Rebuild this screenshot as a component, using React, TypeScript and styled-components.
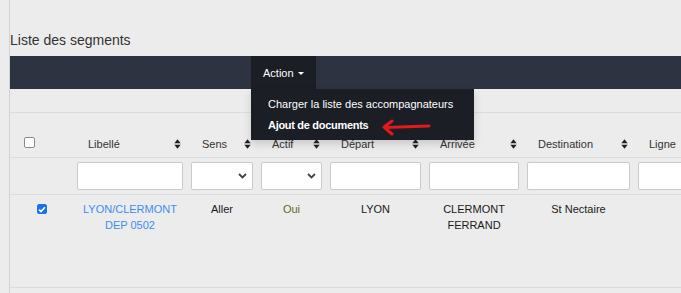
import React from "react";
import styled, { createGlobalStyle } from "styled-components";

const Global = createGlobalStyle`
  html, body { margin: 0; padding: 0; background: #ececec; overflow: hidden; }
  body { font-family: "Liberation Sans", Arial, sans-serif; font-size: 11px; color: #222; }
  * { box-sizing: border-box; }
`;

const Page = styled.div`
  margin-left: 9px;
  border-left: 1px solid #d2d2d2;
  padding-top: 32px;
  min-height: 293px;
`;

const Title = styled.h1`
  margin: 0 0 8px 0;
  font-size: 14px;
  line-height: 16px;
  font-weight: normal;
  color: #333;
`;

const Bar = styled.div`
  position: relative;
  z-index: 5;
  display: flex;
  height: 33px;
  padding-left: 241px;
  background: #2d3340;
  margin-bottom: 23px;
`;

const ActionWrap = styled.div`
  position: relative;
  width: 65px;
  background: #1b1e25;
`;

const ActionButton = styled.div`
  display: flex;
  align-items: center;
  gap: 4px;
  height: 33px;
  padding-left: 12px;
  color: #fff;
  font-size: 11px;
`;

const Caret = styled.span`
  width: 0;
  height: 0;
  border-left: 3px solid transparent;
  border-right: 3px solid transparent;
  border-top: 3px solid #fff;
  margin-top: 1px;
`;

const Menu = styled.div`
  position: absolute;
  top: 100%;
  left: 0;
  width: 223px;
  padding: 5px 0 5px;
  background: #1b1e25;
  box-shadow: 0 4px 8px rgba(0, 0, 0, 0.15);
`;

const MenuItem = styled.div<{ $bold?: boolean }>`
  padding-left: 17px;
  height: 20.5px;
  line-height: 20.5px;
  color: #fff;
  font-weight: ${(p) => (p.$bold ? "bold" : "normal")};
  letter-spacing: ${(p) => (p.$bold ? "-0.3px" : "0")};
  white-space: nowrap;
`;

const Arrow = styled.svg`
  position: absolute;
  left: 130px;
  top: 30px;
`;

const TableWrap = styled.div`
  overflow: hidden;
  border-top: 1px solid #dcdcdc;
`;

const Row = styled.div<{ $height: number }>`
  display: grid;
  grid-template-columns: 63px 114px 70px 69px 99px 98px 111px 100px;
  width: 734px;
  height: ${(p) => p.$height}px;
  border-bottom: 1px solid #dcdcdc;
`;

const HeadCell = styled.div`
  display: flex;
  justify-content: space-between;
  align-items: center;
  padding: 23px 6px 5px 15px;
  height: 44px;
  line-height: 16px;
  color: #333;
  white-space: nowrap;
`;

const CheckCell = styled.div<{ $center?: boolean; $top: number }>`
  display: flex;
  justify-content: ${(p) => (p.$center ? "center" : "flex-start")};
  padding-left: ${(p) => (p.$center ? 0 : 14)}px;
  padding-top: ${(p) => p.$top}px;
`;

const FilterCell = styled.div`
  padding: 4px;
`;

const TextInput = styled.div`
  height: 28px;
  background: #fff;
  border: 1px solid #cacaca;
  border-radius: 2px;
`;

const SelectBox = styled(TextInput)`
  display: flex;
  align-items: center;
  justify-content: flex-end;
  padding-right: 5px;
`;

const DataCell = styled.div<{ $color?: string }>`
  padding: 6px 8px 0;
  text-align: center;
  line-height: 16px;
  color: ${(p) => p.$color || "#1a1a1a"};
`;

const Box = styled.span<{ $checked?: boolean; $size: number }>`
  display: inline-flex;
  align-items: center;
  justify-content: center;
  width: ${(p) => p.$size}px;
  height: ${(p) => p.$size}px;
  border-radius: 2px;
  border: 1px solid ${(p) => (p.$checked ? "#1a73e8" : "#8a8a8a")};
  background: ${(p) => (p.$checked ? "#1a73e8" : "#fff")};
`;

const SortIcon = () => (
  <svg width="7" height="10" viewBox="0 0 7 10">
    <polygon points="0.3,4.2 3.5,0.3 6.7,4.2" fill="#222" />
    <polygon points="0.3,5.8 3.5,9.7 6.7,5.8" fill="#222" />
  </svg>
);

const Chevron = () => (
  <svg width="9" height="6" viewBox="0 0 9 6">
    <polyline points="1,1 4.5,4.5 8,1" fill="none" stroke="#444" strokeWidth="1.8" />
  </svg>
);

const Checkbox = ({ checked, size }: { checked?: boolean; size: number }) => (
  <Box $checked={checked} $size={size}>
    {checked && (
      <svg width="8" height="7" viewBox="0 0 8 7">
        <polyline points="1,3.6 3,5.6 7,1.2" fill="none" stroke="#fff" strokeWidth="1.7" />
      </svg>
    )}
  </Box>
);

const headers = ["Libellé", "Sens", "Actif", "Départ", "Arrivée", "Destination", "Ligne"];
const filters: ("input" | "select")[] = ["input", "select", "select", "input", "input", "input", "input"];

export default function App() {
  return (
    <>
      <Global />
      <Page>
        <Title>Liste des segments</Title>
        <Bar>
          <ActionWrap>
            <ActionButton>
              Action <Caret />
            </ActionButton>
            <Menu>
              <MenuItem>Charger la liste des accompagnateurs</MenuItem>
              <MenuItem $bold>Ajout de documents</MenuItem>
              <Arrow width="52" height="18" viewBox="0 0 52 18">
                <path
                  d="M11 2 L3 8 L11 15 M4 8.5 Q20 8 48 7"
                  fill="none"
                  stroke="#e3191c"
                  strokeWidth="3"
                  strokeLinecap="round"
                  strokeLinejoin="round"
                />
              </Arrow>
            </Menu>
          </ActionWrap>
        </Bar>
        <TableWrap>
          <Row $height={45}>
            <CheckCell $top={24}>
              <Checkbox size={11} />
            </CheckCell>
            {headers.map((h) => (
              <HeadCell key={h}>
                <span>{h}</span>
                {h !== "Ligne" && <SortIcon />}
              </HeadCell>
            ))}
          </Row>
          <Row $height={37}>
            <div />
            {filters.map((f, i) => (
              <FilterCell key={i}>
                {f === "input" ? (
                  <TextInput />
                ) : (
                  <SelectBox>
                    <Chevron />
                  </SelectBox>
                )}
              </FilterCell>
            ))}
          </Row>
          <Row $height={93}>
            <CheckCell $center $top={9}>
              <Checkbox checked size={10} />
            </CheckCell>
            <DataCell $color="#3d8cf2">LYON/CLERMONT DEP 0502</DataCell>
            <DataCell>Aller</DataCell>
            <DataCell $color="#5d6b25">Oui</DataCell>
            <DataCell>LYON</DataCell>
            <DataCell>CLERMONT FERRAND</DataCell>
            <DataCell>St Nectaire</DataCell>
            <DataCell />
          </Row>
        </TableWrap>
      </Page>
    </>
  );
}
